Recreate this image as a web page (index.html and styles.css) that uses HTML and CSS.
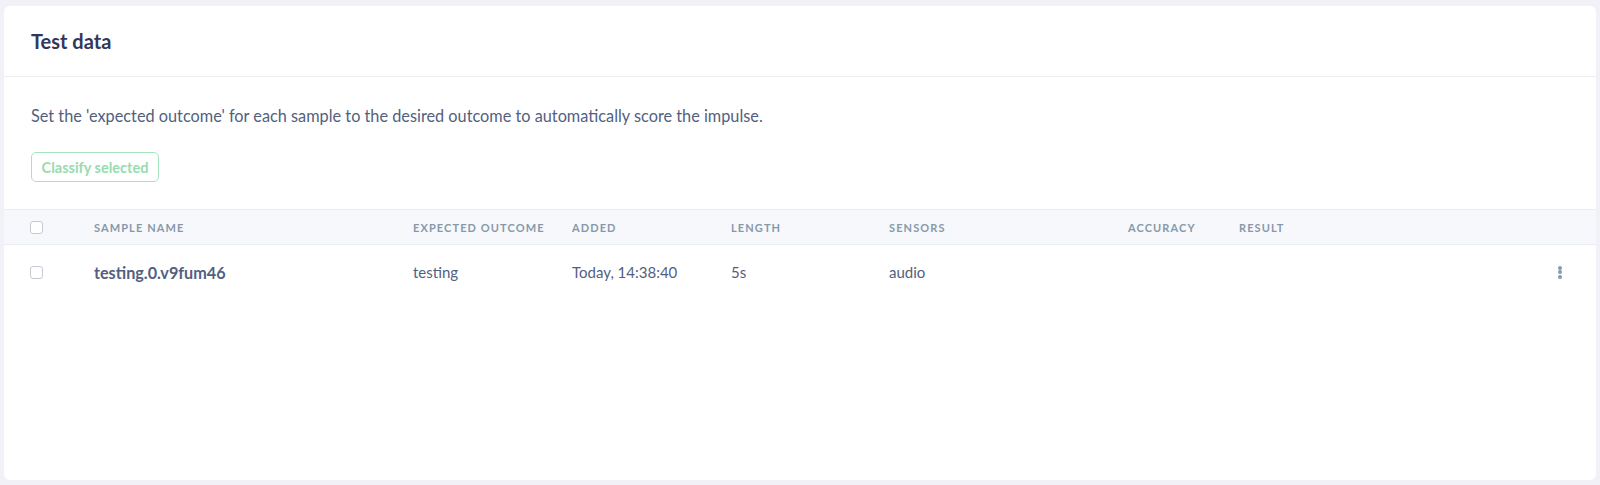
FILE: index.html
```html
<!DOCTYPE html>
<html>
<head>
<meta charset="utf-8">
<link rel="stylesheet" href="styles.css">
</head>
<body>
<div class="card">
  <div class="card-header"><h3 class="title">Test data</h3></div>
  <div class="card-body">
    <p class="desc">Set the 'expected outcome' for each sample to the desired outcome to automatically score the impulse.</p>
    <button class="btn-classify" disabled>Classify selected</button>
  </div>
  <div class="table">
    <div class="row head">
      <div class="cell"><span class="checkbox"></span></div>
      <div class="cell">Sample name</div>
      <div class="cell">Expected outcome</div>
      <div class="cell">Added</div>
      <div class="cell">Length</div>
      <div class="cell">Sensors</div>
      <div class="cell">Accuracy</div>
      <div class="cell">Result</div>
      <div class="cell"></div>
    </div>
    <div class="row body">
      <div class="cell"><span class="checkbox"></span></div>
      <div class="cell name">testing.0.v9fum46</div>
      <div class="cell">testing</div>
      <div class="cell">Today, 14:38:40</div>
      <div class="cell">5s</div>
      <div class="cell">audio</div>
      <div class="cell"></div>
      <div class="cell"></div>
      <div class="cell menu"><span class="dots"><i></i><i></i><i></i></span></div>
    </div>
  </div>
</div>
</body>
</html>
```
FILE: styles.css
```css
html, body {
  margin: 0;
  padding: 0;
}
body {
  background: #f1f1f7;
  font-family: Lato, "Open Sans", sans-serif;
  color: #525f7f;
  padding: 6px 4px 5px 4px;
  height: 485px;
  box-sizing: border-box;
}
.card {
  background: #fff;
  border-radius: 6px;
  height: 474px;
  width: 1592px;
  box-sizing: border-box;
  overflow: hidden;
}
.card-header {
  height: 71px;
  box-sizing: border-box;
  border-bottom: 1px solid #eceef3;
  padding: 0 27px;
  display: flex;
  align-items: center;
}
.title {
  margin: 0;
  font-size: 20px;
  font-weight: 700;
  color: #343659;
}
.card-body {
  padding: 28px 27px 27px;
}
.desc {
  margin: 0;
  font-size: 16.3px;
  line-height: 22px;
  color: #525f7f;
}
.btn-classify {
  margin-top: 25px;
  font-family: Lato, "Open Sans", sans-serif;
  font-size: 14.5px;
  font-weight: 700;
  color: #96dcb0;
  background: #fff;
  border: 1px solid #a6e4bd;
  border-radius: 5px;
  height: 30px;
  width: 128px;
  padding: 0;
  display: block;
}
.row {
  display: grid;
  grid-template-columns: 64px 319px 159px 159px 158px 239px 111px 319px 1fr;
  padding-left: 26px;
  align-items: center;
}
.row.head {
  height: 36px;
  background: #f6f8fb;
  border-top: 1px solid #e9ecf1;
  border-bottom: 1px solid #e9ecf1;
  box-sizing: border-box;
  font-size: 11px;
  font-weight: 700;
  letter-spacing: 1.1px;
  text-transform: uppercase;
  color: #8898aa;
}
.row.body {
  height: 54px;
  font-size: 15px;
  color: #525f7f;
}
.cell.name {
  font-weight: 700;
  font-size: 16.2px;
}
.checkbox {
  display: block;
  width: 11px;
  height: 11px;
  border: 1px solid #c4c9d2;
  border-radius: 3px;
  background: #fff;
}
.menu {
  display: flex;
}
.dots {
  display: flex;
  flex-direction: column;
  gap: 0.5px;
}
.dots i {
  display: block;
  width: 4px;
  height: 4px;
  border-radius: 50%;
  background: #8898aa;
}
```
